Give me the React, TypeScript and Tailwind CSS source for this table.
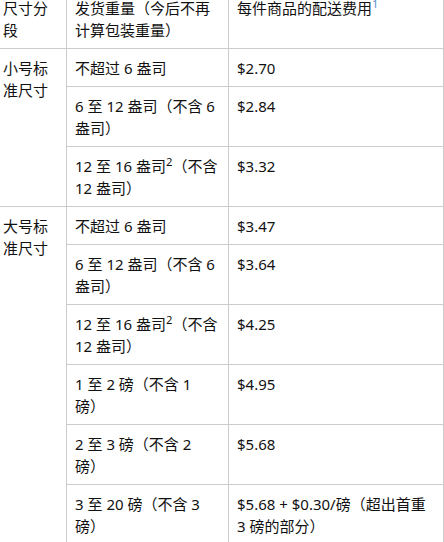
import React from "react";

const cell =
  "border-r border-b border-[#cccccc] pt-[8px] pb-[7px] px-[8px] leading-[22px] align-top";

const rows1: [React.ReactNode, string][] = [
  ["不超过 6 盎司", "$2.70"],
  ["6 至 12 盎司（不含 6 盎司）", "$2.84"],
  [
    <>
      12 至 16 盎司<sup>2</sup>（不含 12 盎司）
    </>,
    "$3.32",
  ],
];

const rows2: [React.ReactNode, React.ReactNode][] = [
  ["不超过 6 盎司", "$3.47"],
  ["6 至 12 盎司（不含 6 盎司）", "$3.64"],
  [
    <>
      12 至 16 盎司<sup>2</sup>（不含 12 盎司）
    </>,
    "$4.25",
  ],
  [
    <>
      1 至 2 磅（不含 1
      <br />
      磅）
    </>,
    "$4.95",
  ],
  [
    <>
      2 至 3 磅（不含 2
      <br />
      磅）
    </>,
    "$5.68",
  ],
  [
    <>
      3 至 20 磅（不含 3
      <br />
      磅）
    </>,
    <>
      $5.68 + $0.30/磅（超出首重
      <br />3 磅的部分）
    </>,
  ],
];

export default function App() {
  return (
    <div
      className="w-[444px] h-[542px] overflow-hidden bg-white text-[#111111] text-[15px]"
      style={{ fontFamily: '"Noto Sans", "Noto Sans CJK SC", sans-serif' }}
    >
      <div className="ml-[-6px] mt-[-12px] w-[450px] grid grid-cols-[72px_162px_215px] border-l border-t border-[#cccccc]">
        <div className={cell}>尺寸分段</div>
        <div className={cell}>发货重量（今后不再计算包装重量）</div>
        <div className={cell}>
          每件商品的配送费用
          <sup className="text-[#5b8fd0]">1</sup>
        </div>

        <div className={`${cell} row-span-3 col-start-1`}>小号标准尺寸</div>
        {rows1.map(([w, p], i) => (
          <React.Fragment key={i}>
            <div className={`${cell} col-start-2`}>{w}</div>
            <div className={`${cell} col-start-3`}>{p}</div>
          </React.Fragment>
        ))}

        <div className={`${cell} row-span-6 col-start-1`}>大号标准尺寸</div>
        {rows2.map(([w, p], i) => (
          <React.Fragment key={i}>
            <div className={`${cell} col-start-2`}>{w}</div>
            <div className={`${cell} col-start-3`}>{p}</div>
          </React.Fragment>
        ))}
      </div>
    </div>
  );
}
